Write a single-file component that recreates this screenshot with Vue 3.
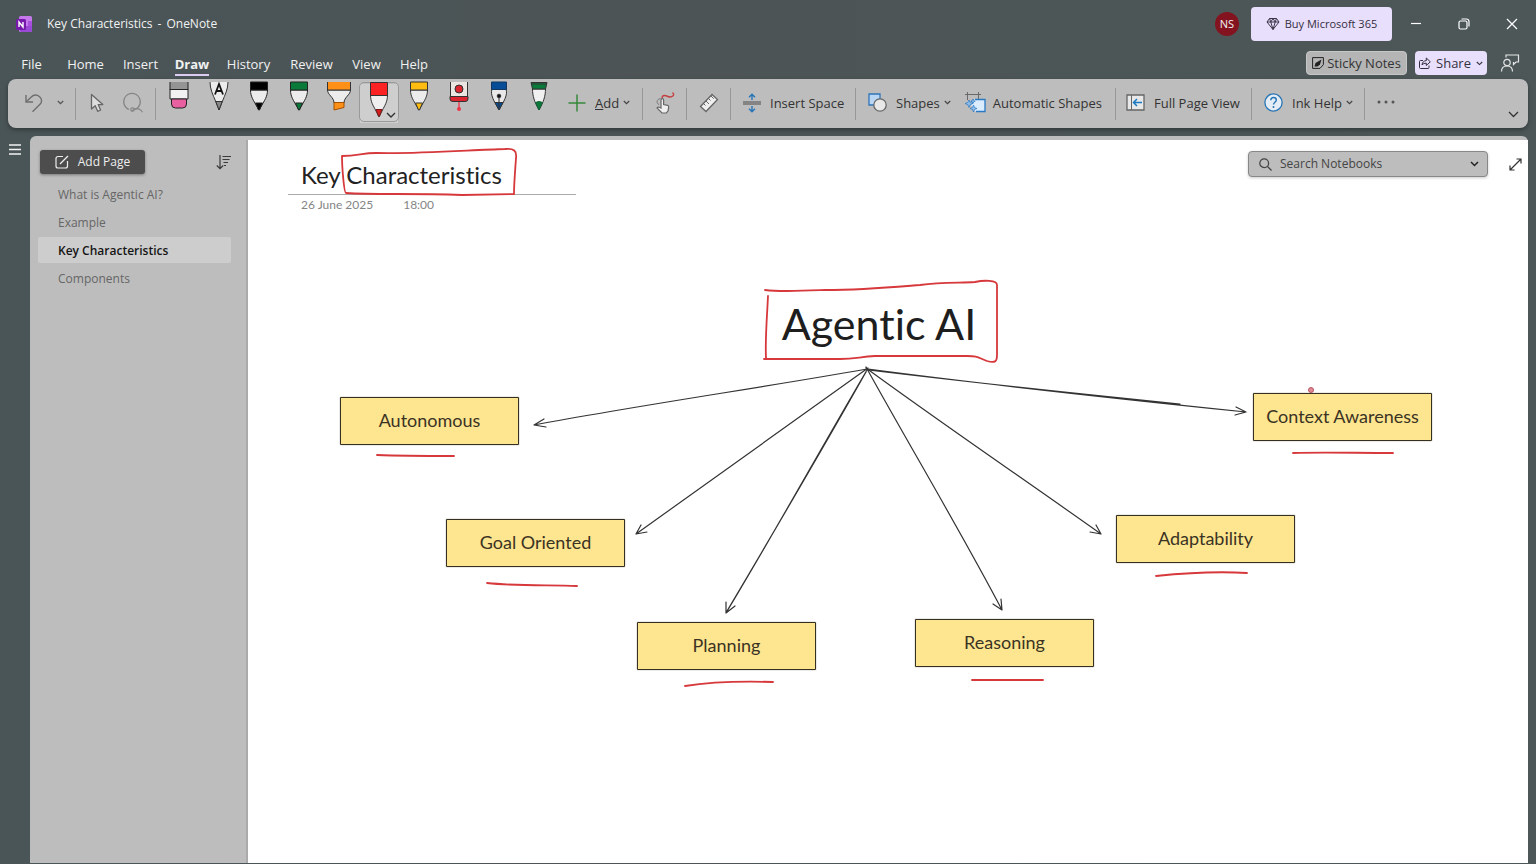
<script setup>
const menus = ['File', 'Home', 'Insert', 'Draw', 'History', 'Review', 'View', 'Help']
const pages = ['What is Agentic AI?', 'Example', 'Key Characteristics', 'Components']
const nodes = [
  { label: 'Autonomous', x: 92, y: 257 },
  { label: 'Goal Oriented', x: 198, y: 379 },
  { label: 'Planning', x: 389, y: 482 },
  { label: 'Reasoning', x: 667, y: 479 },
  { label: 'Adaptability', x: 868, y: 375 },
  { label: 'Context Awareness', x: 1005, y: 253 }
]
const nib = 'M11.500 11 C11.500 18 15 22 17 26 L20 31 L23 26 C25 22 28.500 18 28.500 11Z'
const pens = [
  { name: 'Black pen', cap: '#000', tip: '#000' },
  { name: 'Green pen', cap: '#0a7a3b', tip: '#0a7a3b' }
]
</script>

<template>
  <div class="app">
    <header class="titlebar">
      <svg class="logo" width="17" height="17" viewBox="0 0 17 17" aria-hidden="true">
        <rect x="3" width="13" height="16" rx="1.500" fill="#c578ec" />
        <rect x="12" y="5" width="4" height="5" fill="#a94fe0" />
        <path d="M4 10h12v4.500a1.500 1.500 0 0 1-1.500 1.500H5.500A1.500 1.500 0 0 1 4 14.500z" fill="#9a48d6" />
        <rect y="3" width="10" height="11" rx="1.500" fill="#7719aa" />
        <path d="M3 11V6l4 5V6" fill="none" stroke="#fff" stroke-width="1.400" />
      </svg>
      <h1 class="apptitle"><span>Key Characteristics</span><span>-</span><span>OneNote</span></h1>
      <span class="avatar">NS</span>
      <button class="buy" type="button">
        <svg width="14" height="14" viewBox="0 0 14 14" fill="none" stroke="#3b3548" stroke-width="1" aria-hidden="true">
          <path d="M3.500 1.500h7L13 5l-6 7.500L1 5zM1 5h12M3.500 1.500 4.800 5 7 12.500 9.200 5l1.300-3.500M4.800 5 7 1.500 9.200 5" />
        </svg>
        Buy Microsoft 365
      </button>
      <button class="win" type="button" aria-label="Minimize">
        <svg width="12" height="12" viewBox="0 0 12 12"><path d="M1 5.500h10" stroke="#fff" stroke-width="1.200" /></svg>
      </button>
      <button class="win" type="button" aria-label="Restore">
        <svg width="12" height="12" viewBox="0 0 12 12" fill="none" stroke="#fff" stroke-width="1.200"><rect x="1" y="3" width="8" height="8" rx="1.500" /><path d="M3.500 1h5A2.500 2.500 0 0 1 11 3.500v5" /></svg>
      </button>
      <button class="win" type="button" aria-label="Close">
        <svg width="12" height="12" viewBox="0 0 12 12"><path d="M1 1l10 10M11 1 1 11" stroke="#fff" stroke-width="1.200" /></svg>
      </button>
    </header>

    <div class="menurow">
      <nav class="menus">
        <button v-for="m in menus" :key="m" type="button" class="menu" :class="{ active: m === 'Draw' }"><span>{{ m }}</span></button>
      </nav>
      <button class="sticky" type="button">
        <svg width="12" height="12" viewBox="0 0 12 12" fill="none" stroke="#222" aria-hidden="true"><path d="M.6.6h10.800v7L8 11.400H.6z" /><path d="M2.500 9.500 3.500 6 9.500 2.500 8 7.500 5.500 9.500z" fill="#222" stroke="none" /></svg>
        Sticky Notes
      </button>
      <button class="share" type="button">
        <svg width="12" height="12" viewBox="0 0 12 12" fill="none" stroke="#33303c" aria-hidden="true"><path d="M4 3.500H1.500a1 1 0 0 0-1 1v6a1 1 0 0 0 1 1H9a1 1 0 0 0 1-1V8.500" /><path d="M3 8c.3-3 2-4.300 4.300-4.300V1L11.300 4.800 7.300 8.500V6.200C5.500 6.200 4 6.700 3 8z" /></svg>
        Share
        <svg width="7" height="5" viewBox="0 0 7 5" aria-hidden="true"><path d="M.8 1 3.500 3.600 6.200 1" fill="none" stroke="#33303c" stroke-width="1.100" /></svg>
      </button>
      <button class="person" type="button" aria-label="Feedback">
        <svg width="20" height="20" viewBox="0 0 20 20" fill="none" stroke="#e6e6e6" stroke-width="1.200"><circle cx="7" cy="9.500" r="3.200" /><path d="M1.500 18.500c0-3.500 2.300-5.500 5.500-5.500s5.500 2 5.500 5.500" /><path d="M6 4.500V2h12.500v7H16l-2.500 2.500V9" /></svg>
      </button>
    </div>

    <div class="ribbon" role="toolbar" aria-label="Draw tools">
      <div class="group history">
        <button type="button" aria-label="Undo"><svg width="18" height="20" viewBox="0 0 18 20" fill="none" stroke="#6e6e6e" stroke-width="1.400"><path d="M1 2v7h7" /><path d="M1.500 8.500 6 4.200c2.500-2.400 6-2.600 8.600-.5 2.500 2 2.600 5.400.4 7.600L7.500 18.800" /></svg></button>
        <button type="button" aria-label="Undo options"><svg width="7" height="5" viewBox="0 0 7 5"><path d="M.8 1 3.500 3.600 6.200 1" fill="none" stroke="#555" stroke-width="1.300" /></svg></button>
      </div>
      <div class="group select">
        <button type="button" aria-label="Select"><svg width="14" height="20" viewBox="0 0 14 20"><path d="M1.500 1.500v14.500l3.700-3.200 2.500 5.500 2.900-1.300-2.400-5.400h4.600z" fill="#ddd" stroke="#666" stroke-width="1.300" stroke-linejoin="round" /></svg></button>
        <button type="button" aria-label="Lasso select"><svg width="22" height="22" viewBox="0 0 22 22" fill="none" stroke="#858585" stroke-width="1.200"><path d="M7 17.500A8.300 8.300 0 1 1 13 17.500" /><circle cx="10.500" cy="17.500" r="1.700" /><path d="M12 17c4-1 6.500 0 8.500 3.200M9.500 19.200 13 17" /></svg></button>
      </div>
      <div class="pens">
        <button type="button" class="pen" aria-label="Eraser"><svg viewBox="0 0 40 49" stroke="#222" stroke-width="1"><path d="M11 3h18v8H11z" fill="#949494" stroke="none" /><path d="M11 10.500h18v9.500H11z" fill="#f1f1f1" /><path d="M11 3v8M29 3v8" /><path d="M12.500 20h15v5q0 4-4 4h-7q-4 0-4-4z" fill="#e8609f" /></svg></button>
        <button type="button" class="pen" aria-label="Text pen"><svg viewBox="0 0 40 49" stroke="#333" stroke-width="1"><path d="M11 3c0 7 3 13 5.500 19l3.500 9 3.500-9c2.500-6 5.500-12 5.500-19" fill="#ececec" /><path d="M16.800 22.500h6.400L20 31z" fill="#888" /><path d="M16 15.500 20 5l4 10.500M17.500 12h5" fill="none" stroke="#111" stroke-width="1.800" /></svg></button>
        <button v-for="p in pens" :key="p.name" type="button" class="pen" :aria-label="p.name"><svg viewBox="0 0 40 49" stroke="#222" stroke-width="1"><path :d="nib" fill="#ececec" /><path d="M11.500 3h17v8h-17z" :fill="p.cap" /><path d="M16.500 24h7L20.500 31h-1z" :fill="p.tip" /></svg></button>
        <button type="button" class="pen" aria-label="Highlighter"><svg viewBox="0 0 40 49" stroke="#333" stroke-width="1"><path d="M8.500 11c0 5 6.500 7 6.500 13h10c0-6 6.500-8 6.500-13z" fill="#ececec" /><path d="M8.500 3v8h23V3z" fill="#ff9017" stroke="none" /><path d="M8.500 3v8h23V3" fill="none" /><path d="M15 23.500h10v5l-10 2.500z" fill="#ff9017" stroke="#a05000" /></svg></button>
        <button type="button" class="pen chosen" aria-label="Red pen" aria-pressed="true"><svg viewBox="0 0 40 49" stroke="#333" stroke-width="1"><path d="M11.500 16c0 7 3 11 5 15l3.500 7 3.500-7c2-4 5-8 5-15z" fill="#efefef" /><path d="M11.500 3.500h17v13h-17z" fill="#fa2222" /><path d="M17 30.500h6L20.500 37h-1z" fill="#d91b1b" stroke="#7b1717" /><path d="m28 34 4 4 4-4" fill="none" stroke-width="1.400" /></svg></button>
        <button type="button" class="pen" aria-label="Yellow pen"><svg viewBox="0 0 40 49" stroke="#333" stroke-width="1"><path :d="nib" fill="#ececec" /><path d="M11.500 3h17v8h-17z" fill="#ffbd12" /><path d="M16.500 24h7L20.500 31h-1z" fill="#ffbd12" /></svg></button>
        <button type="button" class="pen" aria-label="Laser pointer"><svg viewBox="0 0 40 49" stroke="#333" stroke-width="1"><path d="M11.500 3v15h17V3" fill="#ebe6e2" /><circle cx="20" cy="10" r="4" fill="#dd2530" /><path d="M11 17.500h18v2.500q0 2.500-3 2.500H14q-3 0-3-2.500z" fill="#dd2530" /><path d="M20 23v6" stroke="#ed4555" stroke-width="1.500" /><circle cx="20" cy="30" r="2" fill="#ed3448" stroke="none" /></svg></button>
        <button type="button" class="pen" aria-label="Fountain pen"><svg viewBox="0 0 40 49" stroke="#333" stroke-width="1"><path d="M13 10c-2 6 2 12 7 21 5-9 9-15 7-21z" fill="#e9e9e9" /><path d="M12.500 3h15v7.500h-15z" fill="#064c96" stroke="#15375f" /><path d="M16 23.500h8L20 31z" fill="#064c96" /><path d="M20 17v12" /><circle cx="20" cy="17" r="1.800" fill="#111" /></svg></button>
        <button type="button" class="pen" aria-label="Brush pen"><svg viewBox="0 0 40 49" stroke="#333" stroke-width="1"><path d="M13.500 10c0 7 2 13 6.500 21 4.500-8 6.500-14 6.500-21z" fill="#f1f1f1" /><path d="M12 3.500h16l-1.500 6.500h-13z" fill="#0a7a3b" /><path d="M12 5h16" /><path d="M16.500 23.500q3.500-2 7 0L20 31z" fill="#0a7a3b" stroke="#135f36" /></svg></button>
      </div>
      <div class="group add">
        <button type="button"><svg width="18" height="18" viewBox="0 0 18 18" aria-hidden="true"><path d="M9 .5v17M.5 9h17" stroke="#36883b" stroke-width="1.500" /></svg><span class="lab"><u>A</u>dd</span><svg width="7" height="5" viewBox="0 0 7 5"><path d="M.8 1 3.500 3.600 6.200 1" fill="none" stroke="#444" stroke-width="1.200" /></svg></button>
      </div>
      <div class="group touch">
        <button type="button" aria-label="Draw with touch"><svg width="20" height="22" viewBox="0 0 20 22"><path d="M5.500 6.500c-4 .5-4.500 5-1.500 6" fill="none" stroke="#777" /><path d="M6 16V8q0-1.400 1.300-1.400T8.600 8v4.500l4 .8q1.300.4 1.100 1.800l-.7 4-1.700 1.900H7L2 16q1-1.400 2.300-.7z" fill="#eee" stroke="#666" stroke-width="1.200" /><path d="M7 6c.5-3.500 3.500-2.500 6-1.500 4 1.500 7.500-1.500 4.500-4" fill="none" stroke="#c54043" stroke-width="1.400" /></svg></button>
      </div>
      <div class="group ruler">
        <button type="button" aria-label="Ruler"><svg width="20" height="20" viewBox="0 0 20 20"><path d="M1.500 13.500 13 1.500l5.500 5L7 18.500z" fill="#f0f0f0" stroke="#666" stroke-width="1.300" /><path d="m4.500 10.500 2 2M7 8l3 3M9.500 5.500l2 2M12 3l2.700 2.700" stroke="#666" /></svg></button>
      </div>
      <div class="group space">
        <button type="button"><svg width="18" height="20" viewBox="0 0 18 20" fill="none" aria-hidden="true"><path d="M0 9h18M0 11h18" stroke="#727272" stroke-width="1.300" /><path d="M9 7V1.500M6 4.200l3-3 3 3M9 13v5.500M6 15.800l3 3 3-3" stroke="#2674b7" stroke-width="1.400" /></svg><span class="lab">Insert Space</span></button>
      </div>
      <div class="group shapes">
        <button type="button"><svg width="19" height="19" viewBox="0 0 19 19" aria-hidden="true"><path d="M1 1h11v11H1z" fill="#b9d7f5" stroke="#2e75b8" stroke-width="1.300" /><circle cx="12" cy="12" r="6.200" fill="#e8e8e8" stroke="#666" stroke-width="1.300" /></svg><span class="lab">Shapes</span><svg width="7" height="5" viewBox="0 0 7 5"><path d="M.8 1 3.500 3.600 6.200 1" fill="none" stroke="#444" stroke-width="1.200" /></svg></button>
        <button type="button"><svg width="21" height="21" viewBox="0 0 21 21" aria-hidden="true"><path d="M0 2.500h16M2.500 0v8M13.500 0v7" stroke="#696969" /><path d="M9 7.500h11v12H10.500L6 13z" fill="#dcecff" /><path d="M10 7.500h10v12h-9" fill="none" stroke="#2879c1" stroke-width="1.300" /><path d="m4 8 1.200 2.500L8 11.500l-2.800 1.200L4 15.500l-1.200-2.800L0 11.500l2.800-1zM8.500 13l1 2.500 2.500 1-2.500 1-1 2.500-1-2.500-2.500-1 2.500-1zM8 7l.7 1.500 1.500.7-1.500.7L8 11.400l-.7-1.500-1.500-.7 1.500-.7z" fill="#8dbce9" stroke="#2879c1" stroke-width=".7" /></svg><span class="lab">Automatic Shapes</span></button>
      </div>
      <div class="group full">
        <button type="button"><svg width="19" height="17" viewBox="0 0 19 17" fill="none" aria-hidden="true"><path d="M1 1h17v15H1z" fill="#e8e8e8" stroke="#666" stroke-width="1.300" /><path d="M5.500 1v15" stroke="#666" /><path d="M16 8.500H8M11 5 7.500 8.500 11 12" stroke="#1979c2" stroke-width="1.500" /></svg><span class="lab">Full Page View</span></button>
      </div>
      <div class="group help">
        <button type="button"><svg width="19" height="19" viewBox="0 0 19 19" fill="none" aria-hidden="true"><circle cx="9.500" cy="9.500" r="8.600" fill="#e4edf5" stroke="#2774b5" stroke-width="1.300" /><path d="M6.800 7.200c0-1.700 1-2.700 2.700-2.700s2.800 1 2.800 2.600c0 2.200-2.800 2.200-2.800 4.500" stroke="#2774b5" stroke-width="1.400" /><circle cx="9.500" cy="14" r="1" fill="#2774b5" /></svg><span class="lab">Ink Help</span><svg width="7" height="5" viewBox="0 0 7 5"><path d="M.8 1 3.500 3.600 6.200 1" fill="none" stroke="#444" stroke-width="1.200" /></svg></button>
      </div>
      <button type="button" class="more" aria-label="More options"><svg width="18" height="4" viewBox="0 0 18 4" fill="#555"><circle cx="2" cy="2" r="1.500" /><circle cx="9" cy="2" r="1.500" /><circle cx="16" cy="2" r="1.500" /></svg></button>
      <button type="button" class="collapse" aria-label="Collapse ribbon"><svg width="11" height="7" viewBox="0 0 11 7"><path d="m1 1 4.500 4.500L10 1" fill="none" stroke="#333" stroke-width="1.300" /></svg></button>
    </div>

    <div class="body">
      <div class="rail">
        <button type="button" aria-label="Show notebooks"><svg width="12" height="11" viewBox="0 0 12 11"><path d="M0 1h12M0 5.500h12M0 10h12" stroke="#f2f2f2" stroke-width="1.700" /></svg></button>
      </div>
      <div class="workspace">
        <aside class="sidebar">
          <div class="sidehead">
            <button type="button" class="addpage"><svg width="14" height="14" viewBox="0 0 14 14" fill="none" stroke="#eee" stroke-width="1.200" aria-hidden="true"><path d="M8 1.500H3a2 2 0 0 0-2 2V11a2 2 0 0 0 2 2h7.500a2 2 0 0 0 2-2V6" /><path d="M5 9 13 1" /></svg>Add Page</button>
            <button type="button" class="sort" aria-label="Sort pages"><svg width="15" height="15" viewBox="0 0 15 15" fill="none" stroke="#3a3a3a" stroke-width="1.200"><path d="M4 0v13.500M.8 10.500 4 13.700l3.200-3.200M6.500 1.500H15M6.500 4.500h7M7.500 7.500h4.500M8 10.500h2" /></svg></button>
          </div>
          <ul class="pages">
            <li v-for="p in pages" :key="p"><a href="#" :class="{ current: p === 'Key Characteristics' }">{{ p }}</a></li>
          </ul>
        </aside>
        <main class="canvas">
          <div class="pagehead">
            <div class="heading">
              <h2>Key Characteristics</h2>
              <p><span>26 June 2025</span><span>18:00</span></p>
            </div>
            <div class="tools">
              <label class="search">
                <svg width="13" height="13" viewBox="0 0 13 13" fill="none" stroke="#444" stroke-width="1.300" aria-hidden="true"><circle cx="5.200" cy="5.200" r="4.400" /><path d="m8.500 8.500 4 4" /></svg>
                <input type="text" placeholder="Search Notebooks" aria-label="Search Notebooks" />
                <svg width="9" height="6" viewBox="0 0 9 6" aria-hidden="true"><path d="m1 1 3.500 3.500L8 1" fill="none" stroke="#222" stroke-width="1.500" /></svg>
              </label>
              <button type="button" class="expand" aria-label="Full screen"><svg width="13" height="13" viewBox="0 0 13 13" fill="none" stroke="#333" stroke-width="1.200"><path d="M1 12 12 1M7.500 1H12v4.500M1 7.500V12h4.500" /></svg></button>
            </div>
          </div>
          <div class="topic">Agentic AI</div>
          <div v-for="n in nodes" :key="n.label" class="node" :style="{ left: n.x + 'px', top: n.y + 'px' }">{{ n.label }}</div>
          <svg class="ink" width="1280" height="722" viewBox="248 140 1280 722" fill="none" aria-hidden="true">
            <g stroke="#333" stroke-width="1.200" stroke-linecap="round" stroke-linejoin="round">
              <path d="M867 369C760 388 640 405 534 425M544 419 534 425 546 427" />
              <path d="M868 368 636 534M641 525 636 534 647 532" />
              <path d="M867 370C820 450 776 530 726 613M866 372C830 436 775 530 727 611M726 602 726 613 735 606" />
              <path d="M866 367C912 450 960 530 1002 610M993 604 1002 610 1001 599" />
              <path d="M866 368C944 425 1025 480 1101 534M1090 532 1101 534 1096 525" />
              <path d="M868 369C990 385 1120 399 1246 412M868 370C960 381 1060 392 1180 404M1236 407 1246 412 1235 415" />
            </g>
            <g stroke="#d6383b" stroke-width="1.800" stroke-linecap="round" stroke-linejoin="round">
              <path d="M342 156C358 156 362 153 376 153C420 154 470 150 505 149C514 148 517 151 516 158C515 173 514 184 514 194L462 195C410 193 375 195 346 193C344 193 342 167 342 156" />
              <path d="M765 290C780 292 800 291 825 290C864 290 895 287 920 285C942 282 960 283 975 282C984 280 997 280 997 285L997 355C997 362 995 363 987 361C977 357 978 356 967 356H875C859 357 855 359 840 359H764M768 296C767 318 765 340 766 358" />
              <path d="M377 455C402 456 425 456 454 456M487 583C515 586 545 585 577 586M685 686C710 682 738 681 773 682M972 680H1043M1156 576C1185 573 1216 571 1247 573M1293 453C1322 452 1355 453 1393 453" />
            </g>
            <circle cx="1311" cy="390" r="2.500" fill="#e28b96" stroke="#b65461" />
          </svg>
        </main>
      </div>
    </div>
  </div>
</template>

<style>
body { margin: 0; background: #4b5456; }
</style>

<style scoped>
* { box-sizing: border-box; }
.app { display: flex; flex-direction: column; min-height: 100vh; padding-bottom: 1px; overflow: hidden; background: linear-gradient(90deg, #4a5558, #4c5455 40%, #4d5758); color: #333; font: 13px/20px "Open Sans", "Noto Sans", sans-serif; font-variant-ligatures: none; }
button { padding: 0; border: 0; background: none; color: inherit; font: inherit; display: flex; align-items: center; justify-content: center; white-space: nowrap; }
svg { display: block; flex: none; }
.titlebar { display: flex; align-items: center; height: 48px; padding-left: 16px; color: #f2f2f2; font-size: 12px; }
.apptitle { display: flex; gap: 5px; flex: 1; margin: 0 0 0 14px; font: inherit; line-height: 22px; }
.avatar { width: 24px; height: 24px; margin-right: 12px; border-radius: 50%; background: #83141f; font-size: 11px; line-height: 24px; text-align: center; }
.buy { width: 141px; height: 34px; gap: 5px; border-radius: 4px; background: #e8dffc; color: #332e40; font-size: 11px; }
.win { width: 48px; height: 32px; }
.menurow { display: flex; align-items: center; height: 31px; padding: 0 14px 0 9px; }
.menus { display: grid; grid-template-columns: 45px 63px 47px 56px 57px 69px 41px 54px; flex: 1; color: #f1f1f1; }
.menu span { padding-top: 2px; border-bottom: 2px solid transparent; line-height: 20px; }
.menu.active { font-weight: 700; }
.menu.active span { border-color: #dccbf0; }
.sticky { width: 101px; height: 24px; gap: 3px; border: 1px solid #c6c6c6; border-radius: 4px; background: #b5b5b5; color: #333; }
.share { width: 72px; height: 24px; gap: 5px; margin-left: 8px; border-radius: 4px; background: #e8dffc; color: #33303c; }
.menurow > button { margin-bottom: 1px; }
.person { width: 24px; height: 24px; margin-left: 11px; }
.ribbon { display: flex; align-items: center; height: 49px; margin: 0 8px; border-radius: 8px; background: #bdbdbd; box-shadow: 0 2px 4px #303839; }
.group { display: flex; align-items: center; height: 32px; padding-bottom: 2px; border-right: 1px solid #979797; }
.lab { margin-left: 9px; }
.history { width: 68px; padding-left: 17px; gap: 14px; }
.select { width: 80px; padding-left: 14px; gap: 18px; }
.pens { display: flex; margin-left: 3px; }
.pen { width: 40px; height: 49px; }
.pen svg { width: 40px; height: 49px; }
.chosen { background: linear-gradient(#cecece, #cecece) center / 38px 39px no-repeat; position: relative; }
.chosen::before { content: ""; position: absolute; inset: 3px 0 6px; border: 1px solid #999; border-radius: 5px; }
.chosen svg { position: relative; }
.add { width: 84px; padding-left: 9px; }
.add .lab + svg, .shapes .lab + svg, .help .lab + svg { margin-left: 4px; }
.touch, .ruler { width: 44px; justify-content: center; }
.space { width: 125px; padding-left: 12px; }
.shapes { width: 260px; padding-left: 12px; gap: 14px; }
.shapes button + button .lab { margin-left: 7px; }
.full { width: 136px; padding-left: 10px; }
.help { width: 113px; padding-left: 12px; }
.more { width: 42px; height: 32px; padding-bottom: 4px; }
.collapse { align-self: flex-end; margin: 0 9px 7px auto; width: 12px; height: 14px; }
.body { display: flex; flex: 1; margin-top: 8px; }
.rail { width: 30px; padding: 8px 0 0 9px; }
.rail button { width: 12px; height: 11px; }
.workspace { display: flex; flex: 1; margin-right: 8px; padding-top: 4px; border-radius: 6px 6px 0 0; background: #bdbdbd; min-width: 0; }
.sidebar { width: 218px; padding: 10px 15px 0 8px; border-right: 2px solid #aaa; font-size: 12px; }
.sidehead { display: flex; align-items: center; justify-content: space-between; padding-left: 2px; }
.addpage { width: 105px; height: 24px; gap: 9px; border-radius: 3px; background: #4d4d4d; box-shadow: 0 1px 3px #777; color: #eee; }
.pages { margin: 7px 0 0; padding: 0; list-style: none; }
.pages a { display: block; height: 26px; margin-bottom: 2px; padding-left: 20px; border-radius: 2px; color: #666; line-height: 27px; text-decoration: none; }
.pages a.current { background: #cdcdcd; color: #151515; font-weight: 600; }
.canvas { position: relative; flex: 1; min-width: 0; overflow: hidden; background: #fff; }
.pagehead { display: flex; justify-content: space-between; padding: 11px 6px 0 40px; }
.heading { width: 288px; }
h2 { margin: 0; padding: 7px 0 2px 13px; border-bottom: 1px solid #aaa; color: #222; font: 400 24px/34px Lato, sans-serif; }
.heading p { display: flex; gap: 30px; margin: 0; padding-left: 13px; color: #858585; font: 12px/19px Lato, sans-serif; }
.tools { display: flex; align-items: flex-start; gap: 21px; }
.search { display: flex; align-items: center; width: 240px; height: 26px; padding: 0 8px 0 10px; border: 1px solid #888; border-radius: 4px; background: #bdbdbd; box-shadow: 0 1px 3px #ccc; }
.search input { flex: 1; min-width: 0; margin: 0 0 0 8px; padding: 0; border: 0; outline: 0; background: none; font: 12px/20px "Open Sans", sans-serif; }
.search input::placeholder { color: #444; opacity: 1; }
.expand { height: 26px; }
.topic { position: absolute; left: 518px; top: 156px; width: 226px; color: #1e1e1e; font: 43px/56px Lato, sans-serif; text-align: center; }
.node { position: absolute; display: flex; align-items: center; justify-content: center; width: 179px; height: 48px; padding-bottom: 2px; border: 1px solid #35301f; border-radius: 1px; background: #fee58f; box-shadow: 0 0 1px #35301f; color: #3a3324; font: 18px/24px Lato, sans-serif; white-space: nowrap; }
.topic, .node, h2 { font-variant-ligatures: none; }
.ink { position: absolute; left: 0; top: 0; pointer-events: none; }
</style>
